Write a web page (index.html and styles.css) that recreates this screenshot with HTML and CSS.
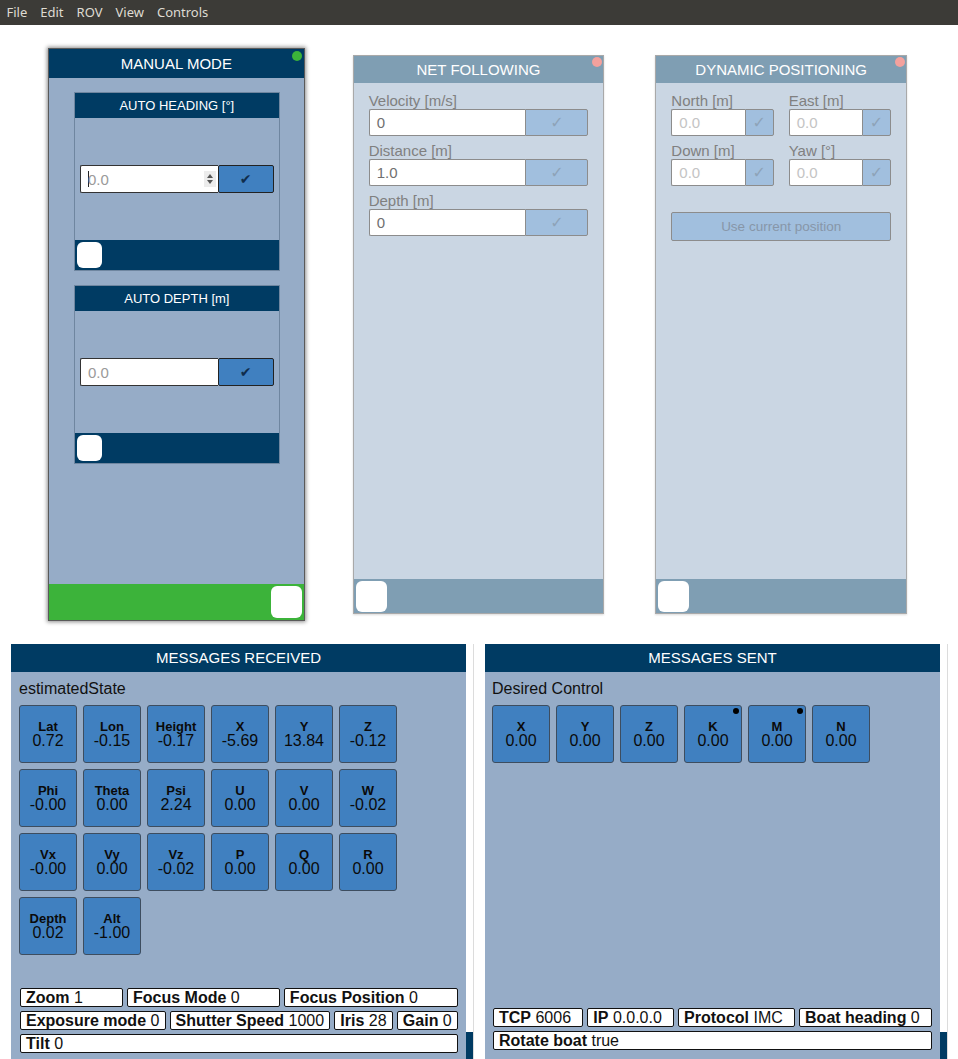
FILE: index.html
```html
<!DOCTYPE html>
<html lang="en">
<head>
<meta charset="utf-8">
<title>ROV Control</title>
<link rel="stylesheet" href="styles.css">
</head>
<body>
<nav class="menubar">
  <span class="menu-item">File</span>
  <span class="menu-item">Edit</span>
  <span class="menu-item">ROV</span>
  <span class="menu-item">View</span>
  <span class="menu-item">Controls</span>
</nav>

<main class="app">
  <section class="modes">
    <div class="mode mode--active">
      <div class="mode-head mode-head--active">MANUAL MODE<span class="status status--on"></span></div>
      <div class="mode-body mode-body--manual">
        <div class="sub">
          <div class="sub-head">AUTO HEADING [°]</div>
          <div class="sub-body">
            <div class="field-row field-row--dark">
              <div class="input input--dark"><span class="caret"></span><span class="ph">0.0</span>
                <svg class="spin" width="12" height="16" viewBox="0 0 12 16"><rect width="12" height="16" fill="#ececec"/><path d="M3 7 L6 3 L9 7 Z" fill="#555"/><path d="M3 9 L6 13 L9 9 Z" fill="#555"/></svg>
              </div>
              <div class="btn btn--dark">✔</div>
            </div>
          </div>
          <div class="sub-foot"><span class="toggle toggle--sub"></span></div>
        </div>
        <div class="sub">
          <div class="sub-head">AUTO DEPTH [m]</div>
          <div class="sub-body">
            <div class="field-row field-row--dark">
              <div class="input input--dark"><span class="ph">0.0</span></div>
              <div class="btn btn--dark">✔</div>
            </div>
          </div>
          <div class="sub-foot"><span class="toggle toggle--sub"></span></div>
        </div>
      </div>
      <div class="mode-foot mode-foot--on"><span class="toggle toggle--on"></span></div>
    </div>

    <div class="mode">
      <div class="mode-head">NET FOLLOWING<span class="status status--off"></span></div>
      <div class="mode-body">
        <div class="field">
          <div class="label">Velocity [m/s]</div>
          <div class="field-row">
            <div class="input"><span class="val">0</span></div>
            <div class="btn btn--wide">✓</div>
          </div>
        </div>
        <div class="field">
          <div class="label">Distance [m]</div>
          <div class="field-row">
            <div class="input"><span class="val">1.0</span></div>
            <div class="btn btn--wide">✓</div>
          </div>
        </div>
        <div class="field">
          <div class="label">Depth [m]</div>
          <div class="field-row">
            <div class="input"><span class="val">0</span></div>
            <div class="btn btn--wide">✓</div>
          </div>
        </div>
      </div>
      <div class="mode-foot"><span class="toggle toggle--off"></span></div>
    </div>

    <div class="mode">
      <div class="mode-head">DYNAMIC POSITIONING<span class="status status--off"></span></div>
      <div class="mode-body">
        <div class="dp-grid">
          <div class="field">
            <div class="label">North [m]</div>
            <div class="field-row">
              <div class="input"><span class="ph-light">0.0</span></div>
              <div class="btn btn--narrow">✓</div>
            </div>
          </div>
          <div class="field">
            <div class="label">East [m]</div>
            <div class="field-row">
              <div class="input"><span class="ph-light">0.0</span></div>
              <div class="btn btn--narrow">✓</div>
            </div>
          </div>
          <div class="field">
            <div class="label">Down [m]</div>
            <div class="field-row">
              <div class="input"><span class="ph-light">0.0</span></div>
              <div class="btn btn--narrow">✓</div>
            </div>
          </div>
          <div class="field">
            <div class="label">Yaw [°]</div>
            <div class="field-row">
              <div class="input"><span class="ph-light">0.0</span></div>
              <div class="btn btn--narrow">✓</div>
            </div>
          </div>
        </div>
        <div class="use-btn">Use current position</div>
      </div>
      <div class="mode-foot"><span class="toggle toggle--off"></span></div>
    </div>
  </section>

  <section class="messages">
    <div class="msg-wrap">
      <div class="msg">
        <div class="msg-head">MESSAGES RECEIVED</div>
        <div class="msg-body msg-body--received">
          <div class="msg-title">estimatedState</div>
          <div class="tiles">
            <div class="tile"><b>Lat</b><span>0.72</span></div>
            <div class="tile"><b>Lon</b><span>-0.15</span></div>
            <div class="tile"><b>Height</b><span>-0.17</span></div>
            <div class="tile"><b>X</b><span>-5.69</span></div>
            <div class="tile"><b>Y</b><span>13.84</span></div>
            <div class="tile"><b>Z</b><span>-0.12</span></div>
            <div class="tile"><b>Phi</b><span>-0.00</span></div>
            <div class="tile"><b>Theta</b><span>0.00</span></div>
            <div class="tile"><b>Psi</b><span>2.24</span></div>
            <div class="tile"><b>U</b><span>0.00</span></div>
            <div class="tile"><b>V</b><span>0.00</span></div>
            <div class="tile"><b>W</b><span>-0.02</span></div>
            <div class="tile"><b>Vx</b><span>-0.00</span></div>
            <div class="tile"><b>Vy</b><span>0.00</span></div>
            <div class="tile"><b>Vz</b><span>-0.02</span></div>
            <div class="tile"><b>P</b><span>0.00</span></div>
            <div class="tile"><b>Q</b><span>0.00</span></div>
            <div class="tile"><b>R</b><span>0.00</span></div>
            <div class="tile"><b>Depth</b><span>0.02</span></div>
            <div class="tile"><b>Alt</b><span>-1.00</span></div>
          </div>
          <div class="info">
            <div class="chip"><b>Zoom</b> 1</div>
            <div class="chip"><b>Focus Mode</b> 0</div>
            <div class="chip"><b>Focus Position</b> 0</div>
            <div class="chip"><b>Exposure mode</b> 0</div>
            <div class="chip"><b>Shutter Speed</b> 1000</div>
            <div class="chip"><b>Iris</b> 28</div>
            <div class="chip"><b>Gain</b> 0</div>
            <div class="chip"><b>Tilt</b> 0</div>
          </div>
        </div>
      </div>
      <div class="scroll"><span class="thumb"></span></div>
    </div>

    <div class="msg-wrap">
      <div class="msg">
        <div class="msg-head">MESSAGES SENT</div>
        <div class="msg-body msg-body--sent">
          <div class="msg-title">Desired Control</div>
          <div class="tiles">
            <div class="tile"><b>X</b><span>0.00</span></div>
            <div class="tile"><b>Y</b><span>0.00</span></div>
            <div class="tile"><b>Z</b><span>0.00</span></div>
            <div class="tile tile--flag"><b>K</b><span>0.00</span></div>
            <div class="tile tile--flag"><b>M</b><span>0.00</span></div>
            <div class="tile"><b>N</b><span>0.00</span></div>
          </div>
          <div class="info">
            <div class="chip"><b>TCP</b> 6006</div>
            <div class="chip"><b>IP</b> 0.0.0.0</div>
            <div class="chip"><b>Protocol</b> IMC</div>
            <div class="chip"><b>Boat heading</b> 0</div>
            <div class="chip"><b>Rotate boat</b> true</div>
          </div>
        </div>
      </div>
      <div class="scroll"><span class="thumb"></span></div>
    </div>
  </section>
</main>
</body>
</html>
```

FILE: styles.css
```css
html, body {
  margin: 0;
  padding: 0;
  height: 100%;
  overflow: hidden;
  background: #fff;
  font-family: "Liberation Sans", Arial, sans-serif;
}

.menubar {
  height: 25px;
  background: #3c3b37;
  display: flex;
  align-items: center;
  padding-left: 0;
}
.menu-item {
  font-family: "Noto Sans", "DejaVu Sans", sans-serif;
  font-size: 13px;
  color: #dfdbd2;
  padding: 0 6.5px;
  line-height: 25px;
}

.app {
  display: flex;
  flex-direction: column;
}

/* ---------- mode panels ---------- */
.modes {
  display: flex;
  align-items: center;
  padding: 23px 0 0 48px;
  height: 573px;
}
.mode {
  position: relative;
  width: 250px;
  height: 557px;
  margin-right: 51px;
  border: 1px solid #a9a9a9;
  box-shadow: 0 1px 2px rgba(0,0,0,0.15);
  display: flex;
  flex-direction: column;
  background: #cad6e3;
}
.mode:first-child { margin-right: 48px; }
.mode--active {
  width: 255px;
  height: 571px;
  border-color: #5a5a5a;
  background: #96acc7;
  box-shadow: 0 0 4px 1px rgba(0,0,0,0.45);
}
.mode-head {
  height: 27px;
  line-height: 27px;
  background: #7f9eb3;
  color: #fff;
  font-size: 15px;
  text-align: center;
  flex: none;
}
.mode-head--active {
  height: 29px;
  line-height: 29px;
  background: #003b63;
}
.status {
  position: absolute;
  border-radius: 50%;
}
.status--on {
  width: 10px;
  height: 10px;
  right: 2px;
  top: 2px;
  background: #3cb33a;
}
.status--off {
  width: 10px;
  height: 10px;
  right: 1px;
  top: 1px;
  background: #f4a19d;
}

.mode-body {
  flex: 1;
  padding: 9px 15px 0 15px;
  display: flex;
  flex-direction: column;
}
.mode-body--manual {
  padding: 14px 24px 0 25px;
  gap: 14px;
}
.mode-foot {
  height: 34px;
  background: #7f9eb3;
  display: flex;
  align-items: center;
  flex: none;
}
.mode-foot--on {
  height: 36px;
  background: #3cb33a;
  justify-content: flex-end;
}
.toggle {
  display: block;
  background: #fff;
  border-radius: 6px;
}
.toggle--off {
  width: 31px;
  height: 31px;
  margin-left: 2px;
}
.toggle--on {
  width: 31px;
  height: 32px;
  margin-right: 2px;
}
.toggle--sub {
  width: 25px;
  height: 26px;
  margin-left: 2px;
}

/* sub panels (manual mode) */
.sub {
  height: 177px;
  border: 1px solid #6f86a0;
  display: flex;
  flex-direction: column;
}
.sub-head {
  height: 25px;
  line-height: 25px;
  background: #003b63;
  color: #fff;
  font-size: 13px;
  text-align: center;
}
.sub-body {
  flex: 1;
  display: flex;
  align-items: center;
  padding: 0 5px;
}
.sub-foot {
  height: 30px;
  background: #003b63;
  display: flex;
  align-items: center;
}

/* fields */
.field { margin-bottom: 6px; }
.label {
  font-size: 15px;
  line-height: 17px;
  color: #808080;
}
.field-row {
  display: flex;
  height: 27px;
  width: 100%;
}
.field-row--dark { height: 28px; }
.input {
  flex: 1;
  background: #fff;
  border: 1px solid #8c8c8c;
  border-right: none;
  border-radius: 2px 0 0 2px;
  display: flex;
  align-items: center;
  padding-left: 7px;
  font-size: 15px;
  min-width: 0;
}
.input--dark {
  border-color: #333;
}
.val { color: #707070; }
.ph { color: #9a9a9a; }
.ph-light { color: #c4c4c4; }
.caret {
  width: 1px;
  height: 16px;
  background: #222;
  margin-right: -1px;
}
.spin {
  margin-left: auto;
  margin-right: 2px;
}
.btn {
  background: #a1bfde;
  border: 1px solid #8c8c8c;
  border-radius: 0 2px 2px 0;
  display: flex;
  align-items: center;
  justify-content: center;
  color: #8ea3b8;
  font-family: "DejaVu Sans", sans-serif;
  font-size: 16px;
  flex: none;
}
.btn--wide { width: 61px; }
.btn--narrow { width: 27px; }
.btn--dark {
  width: 54px;
  background: #4080c0;
  border-color: #222;
  border-radius: 2px;
  color: #0f2d4c;
  font-size: 14px;
}

.dp-grid {
  display: grid;
  grid-template-columns: 1fr 1fr;
  column-gap: 15px;
}
.dp-grid .field { margin-bottom: 6px; }
.use-btn {
  margin-top: 20px;
  height: 27px;
  line-height: 27px;
  background: #a1bfde;
  border: 1px solid #8c8c8c;
  border-radius: 2px;
  text-align: center;
  color: #8796a8;
  font-size: 13.5px;
}

/* ---------- messages ---------- */
.messages {
  display: flex;
  gap: 11px;
  padding: 23px 0 0 11px;
}
.msg-wrap {
  display: flex;
  height: 418px;
}
.msg {
  width: 455px;
  display: flex;
  flex-direction: column;
  background: #96acc7;
}
.msg-head {
  height: 28px;
  line-height: 28px;
  background: #003b63;
  color: #fff;
  font-size: 15px;
  text-align: center;
  flex: none;
}
.msg-body {
  flex: 1;
  display: flex;
  flex-direction: column;
  padding: 8px 8px 9px 8px;
}
.msg-body--sent {
  padding: 8px 8px 12px 7px;
}
.msg-title {
  font-size: 16px;
  line-height: 18px;
  color: #111;
  margin-bottom: 7px;
}
.tiles {
  display: grid;
  grid-template-columns: repeat(6, 58px);
  grid-auto-rows: 58px;
  gap: 6px;
}
.tile {
  position: relative;
  background: #4080c0;
  border: 1px solid #3d4d5f;
  border-radius: 3px;
  box-sizing: border-box;
  display: flex;
  flex-direction: column;
  align-items: center;
  justify-content: center;
  color: #0a0a0a;
}
.tile b {
  font-size: 13px;
  line-height: 13px;
}
.tile span {
  font-size: 16px;
  line-height: 16px;
}
.tile--flag::after {
  content: "";
  position: absolute;
  top: 2px;
  right: 2px;
  width: 6px;
  height: 6px;
  border-radius: 50%;
  background: #000;
}
.info {
  margin-top: auto;
  display: flex;
  flex-wrap: wrap;
  gap: 4px;
  padding: 0 0 0 1px;
}
.chip {
  flex: 1 1 auto;
  background: #fff;
  border: 1px solid #111;
  border-radius: 2px;
  padding: 0 5px;
  font-size: 16px;
  line-height: 17px;
  color: #111;
  white-space: nowrap;
}
.scroll {
  width: 7px;
  background: #fff;
  border: 1px solid #dcdcdc;
  border-width: 0 1px 0 0;
  display: flex;
  flex-direction: column;
  justify-content: flex-end;
}
.thumb {
  display: block;
  height: 30px;
  background: #003b63;
}
```
